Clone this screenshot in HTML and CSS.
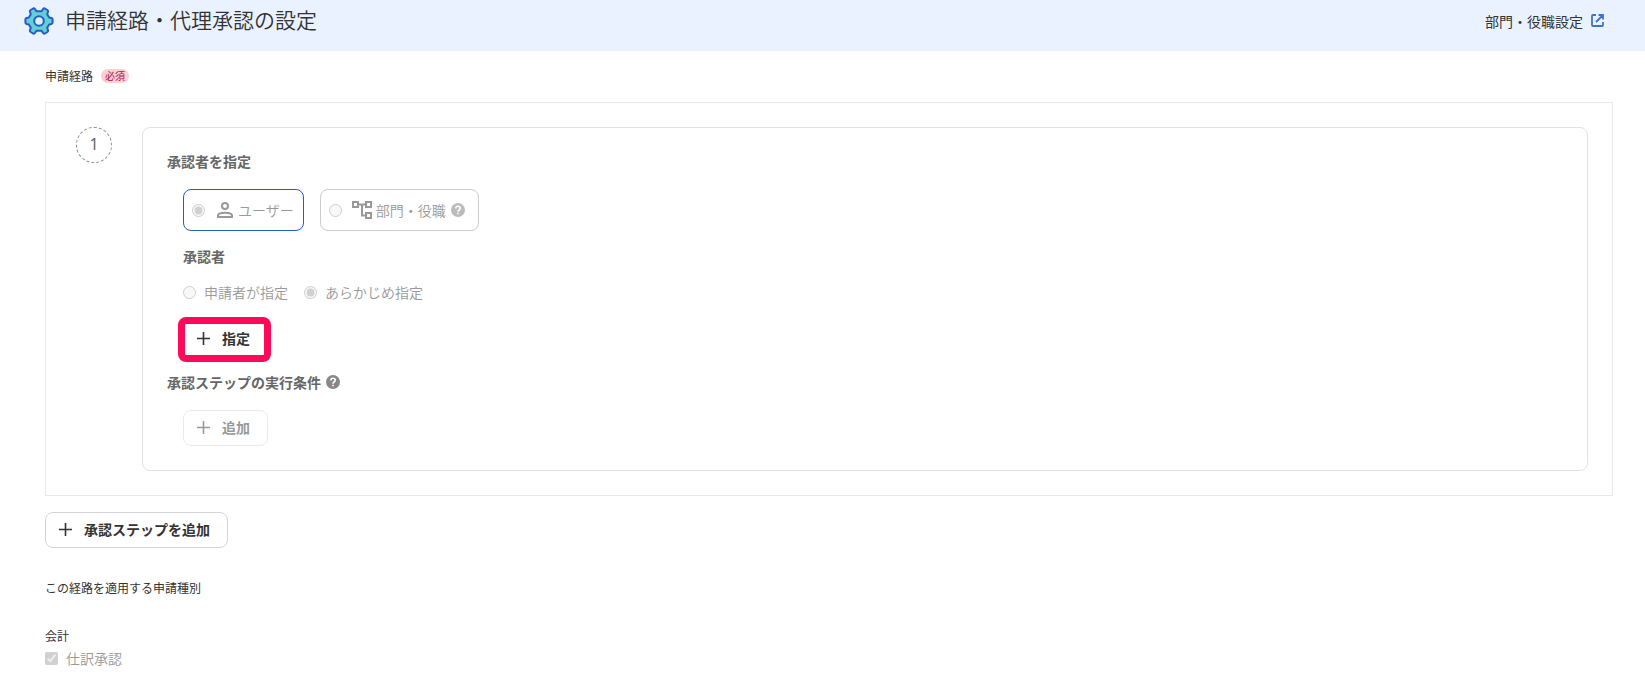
FILE: index.html
```html
<!DOCTYPE html>
<html lang="ja">
<head>
    <meta charset="UTF-8">
    <meta name="viewport" content="width=device-width, initial-scale=1.0">
    <title>申請経路・代理承認の設定</title>
    <link rel="stylesheet" href="styles.css">
</head>
<body>
    <header class="header">
        <svg class="gear" viewBox="0 0 30 28" width="30" height="28" aria-hidden="true">
            <path d="M12.4 4.2H17.6L19 2Q19.8 1 20.8 1.5L23.4 3Q24.4 3.7 24 4.8L23.2 7.2L25.2 10.6L27.4 11Q28.6 11.3 28.6 12.5V15.5Q28.6 16.7 27.4 17L25.2 17.4L23.2 20.8L24 23.2Q24.4 24.3 23.4 25L20.8 26.5Q19.8 27 19 26L17.6 23.8H12.4L11 26Q10.2 27 9.2 26.5L6.6 25Q5.6 24.3 6 23.2L6.8 20.8L4.8 17.4L2.6 17Q1.4 16.7 1.4 15.5V12.5Q1.4 11.3 2.6 11L4.8 10.6L6.8 7.2L6 4.8Q5.6 3.7 6.6 3L9.2 1.5Q10.2 1 11 2Z" fill="#62d0d2" stroke="#285ac8" stroke-width="2" stroke-linejoin="round"/>
            <circle cx="15" cy="14" r="4.8" fill="#d5f3f4" stroke="#285ac8" stroke-width="2"/>
        </svg>
        <h1>申請経路・代理承認の設定</h1>
        <a href="#" class="header-link">部門・役職設定
            <svg viewBox="0 0 13 13" width="13" height="13" aria-hidden="true">
                <path d="M5 1H2Q1 1 1 2V11Q1 12 2 12H11Q12 12 12 11V8M7.5 1H12V5.5M12 1L5 8" fill="none" stroke="#3f6fd8" stroke-width="1.8"/>
            </svg>
        </a>
    </header>

    <main>
        <div class="field-label">申請経路 <span class="required">必須</span></div>

        <!-- 承認ステップ -->
        <section class="route">
            <div class="step-number">1</div>
            <div class="step">
                <h2>承認者を指定</h2>
                <div class="step-body type-list">
                    <label class="type selected">
                        <input type="radio" name="type" checked disabled>
                        <svg class="icon-user" viewBox="0 0 16 16" width="16" height="16" aria-hidden="true">
                            <circle cx="8" cy="4" r="3" fill="none" stroke="#999" stroke-width="2"/>
                            <path d="M1 15V13.5Q1 10.8 8 10.8T15 13.5V15Z" fill="none" stroke="#999" stroke-width="2"/>
                        </svg>
                        <span>ユーザー</span>
                    </label>
                    <label class="type">
                        <input type="radio" name="type" disabled>
                        <svg class="icon-tree" viewBox="0 0 20 18" width="20" height="18" aria-hidden="true">
                            <path d="M1 1H6V6H1ZM14 1H19V6H14ZM14 12H19V17H14ZM6 3.5H14M10 3.5V14.5H14" fill="none" stroke="#999" stroke-width="2"/>
                        </svg>
                        <span>部門・役職</span>
                        <svg class="help pale" viewBox="0 0 14 14" width="14" height="14" aria-hidden="true">
                            <circle cx="7" cy="7" r="7"/>
                            <path d="M4.8 5.5Q4.8 3.3 7 3.3T9.2 5.3Q9.2 6.2 8.1 7T7 8.7M7 9.7V11.2"/>
                        </svg>
                    </label>
                </div>

                <h3>承認者</h3>
                <div class="step-body radio-list">
                    <label><input type="radio" name="approver" disabled>申請者が指定</label>
                    <label><input type="radio" name="approver" checked disabled>あらかじめ指定</label>
                </div>
                <div class="step-body">
                    <button type="button" class="button highlight">
                        <svg viewBox="0 0 13 13" width="13" height="13" aria-hidden="true"><path d="M6.5 0V13M0 6.5H13"/></svg>
                        指定
                    </button>
                </div>

                <h2 class="condition">承認ステップの実行条件
                    <svg class="help" viewBox="0 0 14 14" width="14" height="14" aria-hidden="true">
                        <circle cx="7" cy="7" r="7"/>
                        <path d="M4.8 5.5Q4.8 3.3 7 3.3T9.2 5.3Q9.2 6.2 8.1 7T7 8.7M7 9.7V11.2"/>
                    </svg>
                </h2>
                <div class="step-body">
                    <button type="button" class="button" disabled>
                        <svg viewBox="0 0 13 13" width="13" height="13" aria-hidden="true"><path d="M6.5 0V13M0 6.5H13"/></svg>
                        追加
                    </button>
                </div>
            </div>
        </section>

        <button type="button" class="button">
            <svg viewBox="0 0 13 13" width="13" height="13" aria-hidden="true"><path d="M6.5 0V13M0 6.5H13"/></svg>
            承認ステップを追加
        </button>

        <!-- 申請種別 -->
        <div class="kinds">
            <p>この経路を適用する申請種別</p>
            <p class="group">会計</p>
            <label class="check"><input type="checkbox" checked disabled>仕訳承認</label>
        </div>
    </main>
</body>
</html>
```

FILE: styles.css
```css
* {
    box-sizing: border-box;
}

body {
    margin: 0;
    background: #fff;
    color: #333;
    font-family: "Noto Sans CJK JP", sans-serif;
    font-size: 14px;
    line-height: 24px;
}

h1, h2, h3, p {
    margin: 0;
}

svg {
    flex: none;
}

/* ヘッダー */
.header {
    display: flex;
    align-items: center;
    height: 51px;
    padding: 0 41px 10px 24px;
    background: #eaf2ff;
}

.header h1 {
    margin-left: 11px;
    padding-bottom: 4px;
    font-size: 21px;
    font-weight: 350;
}

.header-link {
    display: flex;
    align-items: center;
    gap: 8px;
    margin-left: auto;
    color: #333;
    text-decoration: none;
}

main {
    padding: 13px 32px 20px 45px;
}

.field-label {
    display: flex;
    align-items: center;
    gap: 8px;
    margin-bottom: 14px;
    font-size: 12px;
}

.required {
    padding: 0 4px;
    border-radius: 7px;
    background: #fbcfd6;
    color: #a81438;
    font-size: 10px;
    line-height: 14px;
}

/* 承認ステップ */
.route {
    display: flex;
    align-items: flex-start;
    gap: 30px;
    margin-bottom: 16px;
    padding: 24px 24px 24px 30px;
    border: 1px solid #e9e9e9;
}

.step-number {
    flex: none;
    width: 36px;
    height: 36px;
    border: 1px dashed #888;
    border-radius: 50%;
    color: #666;
    font-family: "Noto Sans", "Noto Sans CJK JP", sans-serif;
    font-size: 16px;
    line-height: 32px;
    text-align: center;
}

.step {
    flex: 1;
    padding: 21px 24px 24px;
    border: 1px solid #e2e2e2;
    border-radius: 8px;
}

.step h2, .step h3 {
    color: #666;
    font-size: 14px;
    font-weight: 700;
}

.step h3 {
    margin: 13px 0 12px 16px;
}

.step .condition {
    display: flex;
    align-items: center;
    gap: 5px;
    margin: 13px 0 16px;
}

.step-body {
    display: flex;
    margin-left: 16px;
}

input {
    width: 13px;
    height: 13px;
    margin: 0;
}

.type-list {
    gap: 16px;
    margin-top: 16px;
}

.type {
    display: flex;
    align-items: center;
    height: 42px;
    padding: 0 9px 0 8px;
    border: 1px solid #ccc;
    border-radius: 8px;
    color: #999;
    font-weight: 350;
}

.type.selected {
    border-color: #285ac8;
}

.icon-user {
    margin: 0 5px 0 12px;
}

.icon-tree {
    margin: 0 4px 0 10px;
}

.type .help {
    margin: 0 4px 0 5px;
}

.help circle {
    fill: #888;
}

.help.pale circle {
    fill: #bbb;
}

.help path {
    fill: none;
    stroke: #fff;
    stroke-width: 1.6;
}

.radio-list {
    gap: 16px;
    margin-bottom: 17px;
}

.radio-list label, .check {
    display: flex;
    align-items: center;
    gap: 8px;
    color: #999;
    font-weight: 350;
}

/* ボタン */
.button {
    display: flex;
    align-items: center;
    gap: 12px;
    height: 36px;
    padding: 0 17px 2px 13px;
    border: 1px solid #d4d4d4;
    border-radius: 8px;
    background: #fff;
    color: #333;
    font-family: inherit;
    font-size: 14px;
    font-weight: 700;
}

.button path {
    fill: none;
    stroke: currentColor;
    stroke-width: 1.6;
}

.button:disabled {
    border-color: #eaeaea;
    color: #999;
}

.highlight {
    position: relative;
    border-color: transparent;
}

/* 強調枠 */
.highlight::after {
    content: "";
    position: absolute;
    inset: -5px -4px -6px -6px;
    border: 7px solid #ff0a5a;
    border-radius: 8px;
}

/* 申請種別 */
.kinds {
    margin-top: 28px;
}

.kinds p {
    font-size: 12px;
}

.kinds .group {
    margin-top: 26px;
    line-height: 20px;
}
```
